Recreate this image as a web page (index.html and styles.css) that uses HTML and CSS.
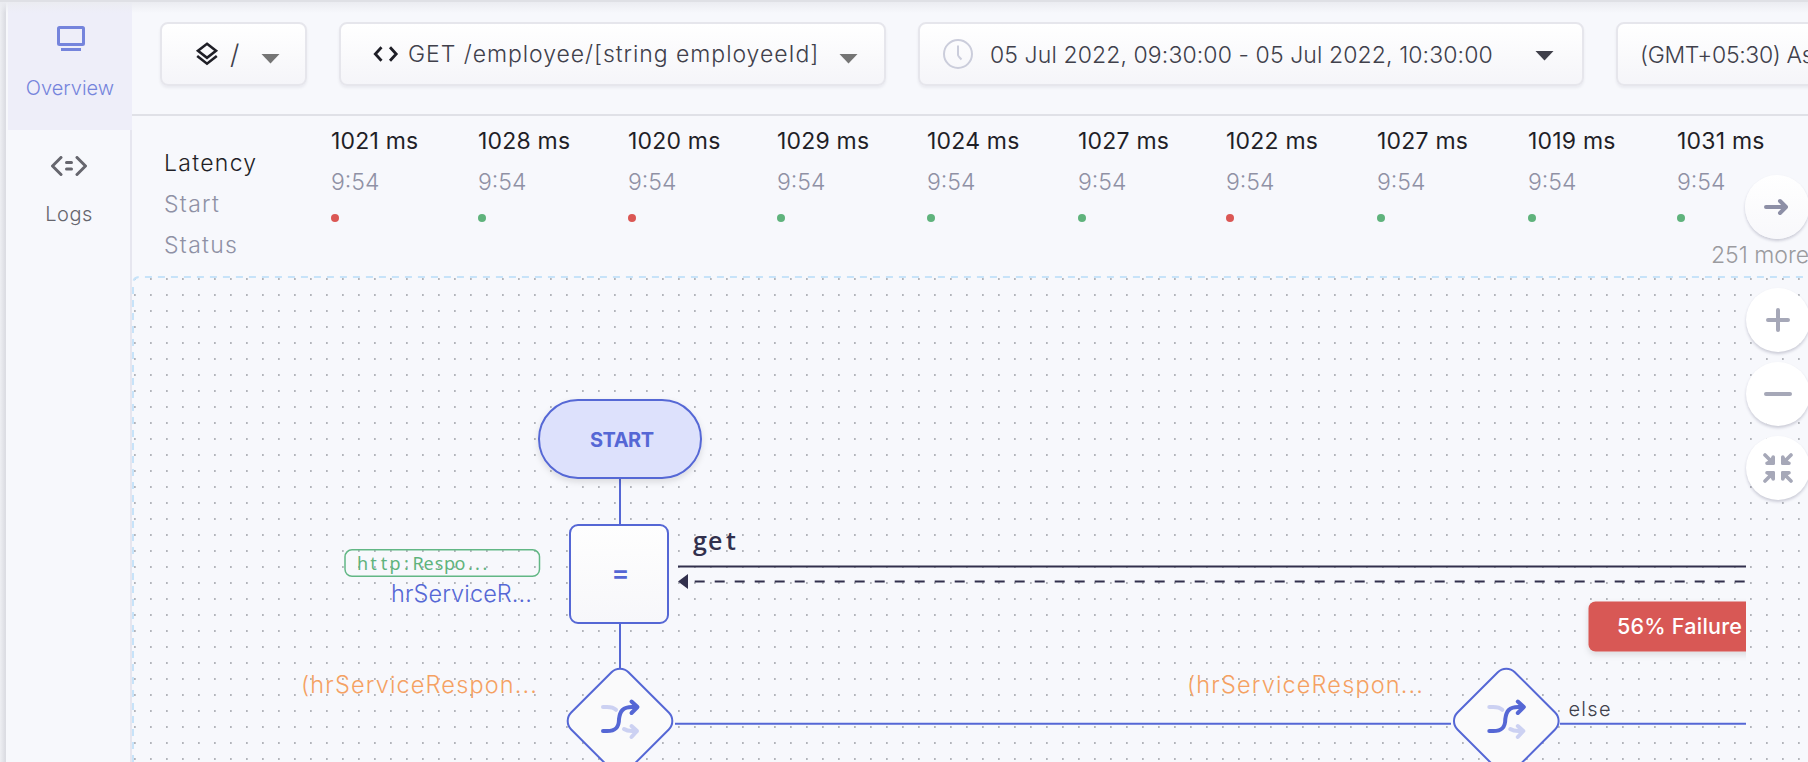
FILE: index.html
```html
<!DOCTYPE html>
<html lang="en">
<head>
<meta charset="utf-8">
<title>Overview</title>
<link rel="stylesheet" href="styles.css">
</head>
<body>
<div class="app">
  <nav class="sidebar">
    <a class="nav-item active">
      <svg width="28" height="26" viewBox="0 0 28 26"><rect x="1.5" y="1.5" width="25" height="17" rx="1" fill="none" stroke="currentColor" stroke-width="3"/><path d="M4 23.5h20" stroke="currentColor" stroke-width="3"/></svg>
      <span class="t-overview">Overview</span>
    </a>
    <a class="nav-item logs">
      <svg width="38" height="20" viewBox="0 0 38 20" fill="none" stroke="currentColor" stroke-width="3" stroke-linecap="round" stroke-linejoin="round"><path d="M11 1.5L2.5 10l8.500 8.500M27 1.500l8.500 8.500L27 18.500M16.500 6.500h5M16.500 13h5"/></svg>
      <span class="t-logs">Logs</span>
    </a>
  </nav>
  <main class="main">
    <header class="toolbar">
      <div class="select service">
        <svg class="ic-layers" width="24" height="24" viewBox="0 0 24 24" fill="none" stroke="#1f1f27" stroke-width="2.600" stroke-linejoin="miter"><path d="M12 1.800l9 7-9 7-9-7zM2.200 14l9.800 7.700 9.800-7.700"/></svg>
        <span class="t-slash">/</span>
        <i class="caret"></i>
      </div>
      <div class="select resource">
        <svg width="26" height="16" viewBox="0 0 26 16" fill="none" stroke="#1f1f27" stroke-width="2.800"><path d="M8.500 1.200L2.300 8l6.200 6.800M17 1.200L23.200 8 17 14.800"/></svg>
        <span class="t-resource">GET /employee/[string employeeId]</span>
        <i class="caret"></i>
      </div>
      <div class="select range">
        <svg width="30" height="30" viewBox="0 0 30 30" fill="none" stroke="#cbcddb" stroke-width="2"><circle cx="15" cy="15" r="14"/><path d="M15 6.500V16q0 1 3.500 4.500"/></svg>
        <span class="t-range">05 Jul 2022, 09:30:00 - 05 Jul 2022, 10:30:00</span>
        <i class="caret dark"></i>
      </div>
      <div class="select zone"><span class="t-zone">(GMT+05:30) As</span></div>
    </header>
    <section class="runs">
      <div class="labels"><span class="t-latency">Latency</span><span class="t-start">Start</span><span class="t-status">Status</span></div>
      <div class="columns">
        <div class="run"><b>1021 ms</b><span>9:54</span><i class="fail"></i></div>
        <div class="run"><b>1028 ms</b><span>9:54</span><i></i></div>
        <div class="run"><b>1020 ms</b><span>9:54</span><i class="fail"></i></div>
        <div class="run"><b>1029 ms</b><span>9:54</span><i></i></div>
        <div class="run"><b>1024 ms</b><span>9:54</span><i></i></div>
        <div class="run"><b>1027 ms</b><span>9:54</span><i></i></div>
        <div class="run"><b>1022 ms</b><span>9:54</span><i class="fail"></i></div>
        <div class="run"><b>1027 ms</b><span>9:54</span><i></i></div>
        <div class="run"><b>1019 ms</b><span>9:54</span><i></i></div>
        <div class="run"><b>1031 ms</b><span>9:54</span><i></i></div>
      </div>
      <div class="more">
        <button class="round next"><svg width="24" height="18" viewBox="0 0 24 18" fill="none" stroke="#8d8fa6" stroke-width="4" stroke-linecap="round" stroke-linejoin="round"><path d="M2 9h19M16 3l6 6-6 6"/></svg></button>
        <span class="t-more">251 more</span>
      </div>
    </section>
    <section class="canvas">
      <svg class="diagram" width="1676" height="486" viewBox="132 276 1676 486">
        <defs>
          <pattern id="dots" x="134" y="278" width="16" height="16" patternUnits="userSpaceOnUse"><rect width="2" height="2" fill="#c4c6cc"/><rect width="1" height="2" fill="#b2b4ba"/></pattern>
          <linearGradient id="face" x1="0" y1="0" x2="0" y2="1"><stop offset="0" stop-color="#fefefe"/><stop offset="1" stop-color="#f7f7fa"/></linearGradient>
          <filter id="soft" x="-20%" y="-20%" width="140%" height="150%"><feDropShadow dx="0" dy="3" stdDeviation="3" flood-color="#000" flood-opacity=".12"/></filter>
          <clipPath id="view"><rect x="132" y="276" width="1614" height="486"/></clipPath>
          <g id="branch">
            <rect x="-40.500" y="-40.500" width="81" height="81" rx="12" transform="rotate(45)" fill="#fafafb" stroke="#5567d5" stroke-width="2"/>
            <g fill="none" stroke-linecap="round" stroke-linejoin="round" stroke-width="4">
              <path d="M-17 -14h4q6 0 9 2.800" stroke="#ccd1f2"/>
              <path d="M4 8q3 2 8 2h5M11.500 5l5.500 5-5.500 6" stroke="#ccd1f2"/>
              <path d="M-17 10h4C-4 10 -1 6 -1 -2C0 -10 3 -14 12 -14h5M11.500 -19.500l6 5.500-6 6" stroke="#5567d5"/>
            </g>
          </g>
        </defs>
        <rect x="132" y="278" width="1676" height="484" fill="url(#dots)"/>
        <path d="M133 762V284q0-7 7-7H1806" fill="none" stroke="#c7e3f9" stroke-width="2" stroke-dasharray="7 6"/>
        <g clip-path="url(#view)">
          <path d="M620 478v47M620 623v46M675 723.800H1451M1560 723.800H1746" stroke="#5567d5" stroke-width="2"/>
          <rect x="539" y="400" width="162" height="78" rx="39" fill="#dde1fc" stroke="#5567d5" stroke-width="2" filter="url(#soft)"/>
          <text class="start" x="590" y="447" textLength="64">START</text>
          <rect x="570" y="525" width="98" height="98" rx="8" fill="url(#face)" stroke="#5567d5" stroke-width="2"/>
          <text class="equals" x="611.500" y="582" textLength="18" lengthAdjust="spacingAndGlyphs">=</text>
          <use href="#branch" x="620" y="721"/>
          <use href="#branch" x="1506.300" y="721"/>
          <text class="method" x="693 708 726" y="549.500">get</text>
          <path d="M678 566.500H1746" stroke="#32304d" stroke-width="2"/>
          <path d="M694.700 581.500H1746" stroke="#32304d" stroke-width="2" stroke-dasharray="10 10"/>
          <path d="M678 581.500l10-7.500v15z" fill="#32304d"/>
          <rect x="345" y="549.800" width="194.500" height="26.500" rx="7" fill="none" stroke="#62b785" stroke-width="1.500"/>
          <text class="type" x="362.500 373.500 384 395 406.500 418 428.500 439 449.500 460 470.500 477.500 485" y="570">http:Respo...</text>
          <text class="var" x="391" y="602" textLength="141">hrServiceR...</text>
          <text class="cond" x="301" y="693" textLength="236">(hrServiceRespon...</text>
          <text class="cond" x="1187" y="693" textLength="236">(hrServiceRespon...</text>
          <text class="else" x="1568.500" y="716" textLength="42">else</text>
          <rect x="1588.500" y="601.500" width="220" height="50" rx="7" fill="#d85855" filter="url(#soft)"/>
          <text class="badge" x="1617" y="634" textLength="125">56% Failure</text>
        </g>
      </svg>
      <div class="zoom">
        <button class="round"><svg width="24" height="24" viewBox="0 0 24 24" stroke="#a6a8b8" stroke-width="4" stroke-linecap="round"><path d="M2 12h20M12 2v20"/></svg></button>
        <button class="round"><svg width="28" height="4" viewBox="0 0 28 4" stroke="#a6a8b8" stroke-width="4" stroke-linecap="round"><path d="M2 2h24"/></svg></button>
        <button class="round"><svg width="30" height="30" viewBox="0 0 30 30" fill="#a6a8b8" stroke="#a6a8b8" stroke-width="3.600" stroke-linecap="round" stroke-linejoin="round"><g id="q"><path d="M2 2l6 6M10.200 4v6.200H4"/><path d="M10.200 5v5.200H5z"/></g><use href="#q" transform="matrix(-1 0 0 1 30 0)"/><use href="#q" transform="matrix(1 0 0 -1 0 30)"/><use href="#q" transform="rotate(180 15 15)"/></svg></button>
      </div>
    </section>
  </main>
</div>
</body>
</html>
```
FILE: styles.css
```css
* { box-sizing: border-box; }
body {
  margin: 0;
  background: #f7f8fc;
  font-family: Inter, "Liberation Sans", sans-serif;
  font-size: 23px;
  font-weight: 350;
  color: #40404b;
}
.app {
  position: relative;
  display: flex;
  width: 1808px;
  height: 762px;
  overflow: hidden;
  padding-left: 8px;
  background: linear-gradient(90deg, #eeeff3 0, #dcdde3 5px, #dcdde3 6px, #f7f8fc 6px);
}
.app::before {
  content: "";
  position: absolute;
  inset: 0 0 auto 0;
  height: 13px;
  background: linear-gradient(#dfe0e5 2px, #ebecf1 2px, rgba(247, 248, 252, 0) 13px);
}
.app span, .app b { white-space: nowrap; }
.sidebar { width: 124px; flex: none; border-right: 2px solid #e6e6ef; }
.nav-item { display: flex; flex-direction: column; align-items: center; font-size: 20px; line-height: 24px; }
.nav-item.active { height: 130px; padding: 26px 0 0 2px; background: #eeeef9; color: #7584dc; width: 124px; }
.nav-item.active span { margin: 24px 2px 0 0; }
.nav-item.logs { padding-top: 26px; color: #66666e; }
.nav-item.logs span { margin-top: 26px; letter-spacing: .5px; }
.main { flex: 1; min-width: 0; display: flex; flex-direction: column; }
.toolbar { height: 116px; flex: none; display: flex; gap: 32px; padding: 22px 0 0 28px; border-bottom: 2px solid #e0e1e7; }
.select {
  height: 64px;
  flex: none;
  display: flex;
  align-items: center;
  border: 2px solid #e6e6ec;
  border-radius: 8px;
  background: linear-gradient(#fff, #f5f5f9);
  box-shadow: 0 2px 3px rgba(20, 20, 50, .06);
}
.service { width: 147px; padding-left: 33px; }
.resource { width: 547px; padding-left: 32px; }
.range { width: 666px; padding-left: 23px; }
.zone { width: 360px; padding-left: 22px; }
.t-slash { margin-left: 11px; width: 12px; font-size: 27px; }
.t-resource { margin-left: 9px; width: 413px; letter-spacing: .95px; }
.t-range { margin: 2px 0 0 17px; width: 506px; letter-spacing: .1px; }
.t-zone { letter-spacing: -.35px; margin-top: 2px; }
.caret { width: 19px; height: 10px; margin: 9px 0 0 18px; background: #757575; clip-path: polygon(0 0, 100% 0, 50% 100%); }
.service .caret { margin-left: 19px; }
.caret.dark { margin: 3px 0 0 39px; background: #40404b; }
.runs { height: 160px; flex: none; display: flex; position: relative; line-height: 41px; color: #8f91a5; }
.labels { width: 199px; padding: 27px 0 0 32px; display: flex; flex-direction: column; letter-spacing: 1.3px; }
.t-latency { color: #1f1f27; }
.columns { display: grid; grid-template-columns: 147px 150px 149px 150px 151px 148px 151px 151px 149px 130px; padding-top: 5px; height: 126px; }
.run { display: flex; flex-direction: column; }
.run b { font-weight: 380; letter-spacing: .2px; color: #1f1f27; }
.run i { width: 8px; height: 8px; margin-top: 11px; border-radius: 50%; background: #5fb37c; }
.run i.fail { background: #db5754; }
.more { position: absolute; left: 1579px; top: 59px; }
.round {
  display: flex;
  align-items: center;
  justify-content: center;
  width: 64px;
  height: 64px;
  padding: 0;
  border: 0;
  border-radius: 50%;
  background: #fff;
  box-shadow: 0 2px 3px rgba(30, 30, 70, .2);
}
.next { margin-left: 34px; background: linear-gradient(#fff, #f8f8fb); }
.next svg { margin-left: -3px; }
.t-more { display: block; margin-top: -4px; color: #9b9b9f; }
.canvas { height: 486px; position: relative; }
.diagram { display: block; }
.zoom { position: absolute; left: 1614px; top: 12px; display: flex; flex-direction: column; gap: 10px; }
.start { font: 700 20px Inter, sans-serif; fill: #5567d5; }
.equals { font: 600 26px Inter, sans-serif; fill: #5567d5; }
.method { font: 600 25px "Open Sans", sans-serif; fill: #32304d; }
.type { font: 400 18px "Noto Sans", sans-serif; fill: #5fb37c; text-anchor: middle; }
.var { font-size: 23.5px; fill: #5567d5; }
.cond { font-size: 23.5px; fill: #f5a162; }
.else { font-size: 20px; fill: #40404b; }
.badge { font-size: 21.5px; font-weight: 500; fill: #fff; }
```
